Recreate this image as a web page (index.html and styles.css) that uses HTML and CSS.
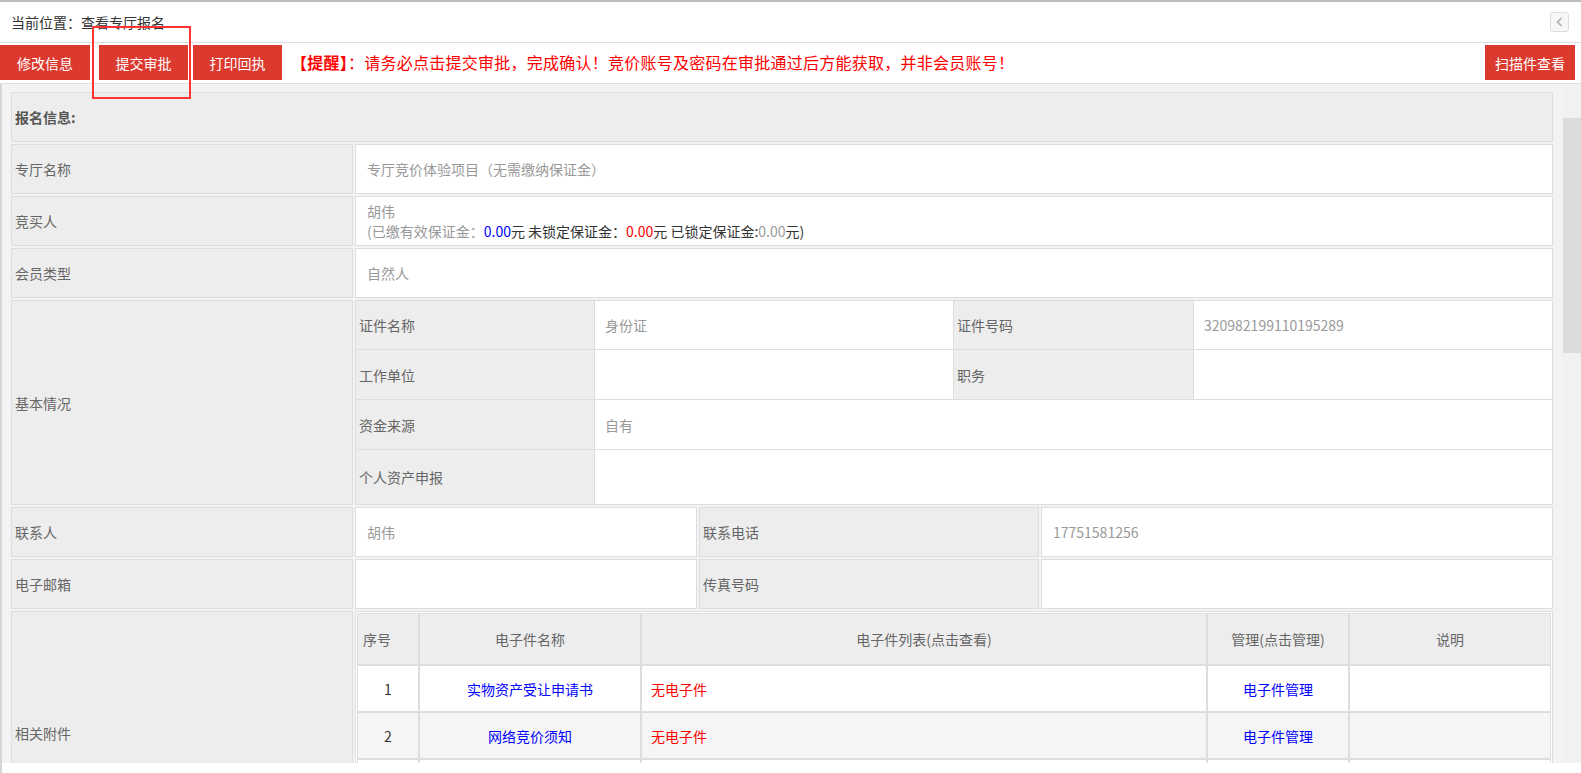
FILE: index.html
```html
<!DOCTYPE html>
<html lang="zh-CN">
<head>
<meta charset="utf-8">
<title>查看专厅报名</title>
<link rel="stylesheet" href="styles.css">
</head>
<body>
<div class="page">
  <header class="crumb">
    <span class="crumb-text">当前位置：查看专厅报名</span>
    <button class="collapse" type="button" aria-label="收起">
      <svg width="7" height="10" viewBox="0 0 7 10"><polyline points="5.5,1 1.5,5 5.5,9" fill="none" stroke="#aaa" stroke-width="1.6"/></svg>
    </button>
  </header>

  <div class="toolbar">
    <button class="btn btn-edit" type="button">修改信息</button>
    <button class="btn btn-submit" type="button">提交审批</button>
    <button class="btn btn-print" type="button">打印回执</button>
    <span class="notice"><b>【提醒】</b>：请务必点击提交审批，完成确认！竞价账号及密码在审批通过后方能获取，并非会员账号！</span>
    <button class="btn btn-scan" type="button">扫描件查看</button>
  </div>

  <div class="body-wrap">
    <div class="content">
      <div class="main">
        <div class="form">
          <div class="cell lbl full title">报名信息:</div>

          <div class="cell lbl">专厅名称</div>
          <div class="cell val wide">专厅竞价体验项目（无需缴纳保证金）</div>

          <div class="cell lbl">竞买人</div>
          <div class="cell val wide">
            <div class="bidder">
              <div>胡伟</div>
              <div>(已缴有效保证金：<span class="blue">0.00</span><span class="dark">元 未锁定保证金：</span><span class="red">0.00</span><span class="dark">元 已锁定保证金:</span>0.00<span class="dark">元)</span></div>
            </div>
          </div>

          <div class="cell lbl">会员类型</div>
          <div class="cell val wide">自然人</div>

          <div class="cell lbl">基本情况</div>
          <div class="cell sub wide">
            <div class="subgrid">
              <div class="s-lbl">证件名称</div>
              <div class="s-val">身份证</div>
              <div class="s-lbl">证件号码</div>
              <div class="s-val">320982199110195289</div>

              <div class="s-lbl">工作单位</div>
              <div class="s-val"></div>
              <div class="s-lbl">职务</div>
              <div class="s-val"></div>

              <div class="s-lbl">资金来源</div>
              <div class="s-val s-wide">自有</div>

              <div class="s-lbl">个人资产申报</div>
              <div class="s-val s-wide"></div>
            </div>
          </div>

          <div class="cell lbl">联系人</div>
          <div class="cell val">胡伟</div>
          <div class="cell lbl">联系电话</div>
          <div class="cell val">17751581256</div>

          <div class="cell lbl">电子邮箱</div>
          <div class="cell val"></div>
          <div class="cell lbl">传真号码</div>
          <div class="cell val"></div>

          <div class="cell lbl">相关附件</div>
          <div class="cell att-cell wide">
            <div class="att">
              <div class="att-row head">
                <div class="th-left">序号</div>
                <div>电子件名称</div>
                <div>电子件列表(点击查看)</div>
                <div>管理(点击管理)</div>
                <div>说明</div>
              </div>
              <div class="att-row">
                <div class="num">1</div>
                <div class="link">实物资产受让申请书</div>
                <div class="none">无电子件</div>
                <div class="link">电子件管理</div>
                <div></div>
              </div>
              <div class="att-row alt">
                <div class="num">2</div>
                <div class="link">网络竞价须知</div>
                <div class="none">无电子件</div>
                <div class="link">电子件管理</div>
                <div></div>
              </div>
              <div class="att-row">
                <div class="num"></div>
                <div class="link"></div>
                <div class="none"></div>
                <div class="link"></div>
                <div></div>
              </div>
              <div class="att-row alt">
                <div class="num"></div>
                <div class="link"></div>
                <div class="none"></div>
                <div class="link"></div>
                <div></div>
              </div>
            </div>
          </div>
        </div>
      </div>
      <div class="scrollbar"><div class="thumb"></div></div>
    </div>
    <div class="bottom-gap"></div>
  </div>

  <div class="highlight"></div>
</div>
</body>
</html>
```

FILE: styles.css
```css
* { box-sizing: border-box; }

html, body {
  margin: 0;
  padding: 0;
}

body {
  width: 1581px;
  height: 773px;
  overflow: hidden;
  background: #fff;
  color: #333;
  font-family: "Noto Sans CJK SC", "Noto Sans", sans-serif;
  font-size: 14px;
  line-height: 20px;
}

.page {
  position: relative;
  height: 773px;
  display: flex;
  flex-direction: column;
}

/* breadcrumb header */
.crumb {
  height: 43px;
  flex: none;
  border-top: 2px solid #bdbdbd;
  border-bottom: 1px solid #ddd;
  display: flex;
  align-items: center;
  justify-content: space-between;
  padding: 0 12px 0 11px;
}

.crumb-text {
  color: #333;
}

.collapse {
  width: 19px;
  height: 20px;
  padding: 0;
  border: 1px solid #ddd;
  border-radius: 3px;
  background: #f7f7f7;
  display: flex;
  align-items: center;
  justify-content: center;
}

/* toolbar */
.toolbar {
  height: 41px;
  flex: none;
  border-bottom: 1px solid #ddd;
  display: flex;
  align-items: flex-start;
  padding-top: 2px;
}

.btn {
  height: 35px;
  padding: 0;
  border: 0;
  background: #dc3a2f;
  color: #fff;
  font-family: inherit;
  font-size: 14px;
  cursor: pointer;
}

.btn-edit { width: 90px; margin-right: 9px; }
.btn-submit { width: 89px; margin-right: 5px; }
.btn-print { width: 89px; }
.btn-scan { width: 90px; margin-right: 6px; }

.notice {
  flex: 1;
  margin-left: 9px;
  color: #f00;
  font-size: 16px;
  line-height: 35px;
  letter-spacing: 0.25px;
  white-space: nowrap;
}

/* content */
.body-wrap {
  flex: 1;
  border-left: 2px solid #d6d6d6;
  display: flex;
  flex-direction: column;
}

.content {
  height: 679px;
  flex: none;
  display: flex;
  background: #f3f3f3;
  overflow: hidden;
}

.main {
  flex: 1;
  padding: 8px 10px 0 9px;
  overflow: hidden;
}

.scrollbar {
  width: 18px;
  flex: none;
  background: #f1f1f1;
  padding-top: 34px;
}

.thumb {
  height: 235px;
  background: #dcdcdc;
}

.bottom-gap {
  flex: 1;
  background: #fff;
}

/* form grid */
.form {
  display: grid;
  grid-template-columns: 342px 342px 340px 1fr;
  grid-template-rows: 50px 50px 50px 50px 205px 50px 50px 244px;
  gap: 2px;
}

.cell {
  border: 1px solid #ddd;
  display: flex;
  align-items: center;
  min-width: 0;
}

.lbl {
  background: #ededed;
  color: #666;
  padding-left: 3px;
}

.val {
  background: #fff;
  color: #999;
  padding-left: 11px;
}

.full { grid-column: 1 / -1; }
.wide { grid-column: 2 / -1; }

.title {
  font-weight: bold;
  color: #555;
}

.blue { color: #00f; }
.red { color: #f00; }
.dark { color: #333; }

/* nested basic info */
.sub {
  display: block;
  padding: 0;
  background: #fff;
}

.subgrid {
  display: grid;
  grid-template-columns: 238px 358px 239px 1fr;
  grid-template-rows: 48px 49px 49px 54px;
  gap: 1px;
  background: #ddd;
  height: 100%;
}

.subgrid > div {
  display: flex;
  align-items: center;
}

.s-lbl {
  background: #ededed;
  color: #666;
  padding-left: 3px;
}

.s-val {
  background: #fff;
  color: #999;
  padding-left: 10px;
}

.s-wide { grid-column: 2 / -1; }

/* attachments */
.att-cell {
  display: block;
  padding: 1px;
  background: #fff;
}

.att {
  display: grid;
  grid-template-columns: 62px 222px 566px 142px 1fr;
  grid-template-rows: 52px repeat(4, 47px);
}

.att-row { display: contents; }

.att-row > div {
  border: 1px solid #ddd;
  display: flex;
  align-items: center;
  justify-content: center;
  background: #fff;
}

.att-row.alt > div { background: #f5f5f5; }

.att-row.head > div {
  background: #ededed;
  color: #666;
}

.att-row.head > .th-left {
  justify-content: flex-start;
  padding-left: 5px;
}

.att-row > .num { color: #333; }
.att-row > .link { color: #00f; }

.att-row > .none {
  justify-content: flex-start;
  padding-left: 9px;
  color: #f00;
}

/* annotation overlay */
.highlight {
  position: absolute;
  left: 92px;
  top: 26px;
  width: 99px;
  height: 73px;
  border: 2px solid #f33;
  pointer-events: none;
}
```
